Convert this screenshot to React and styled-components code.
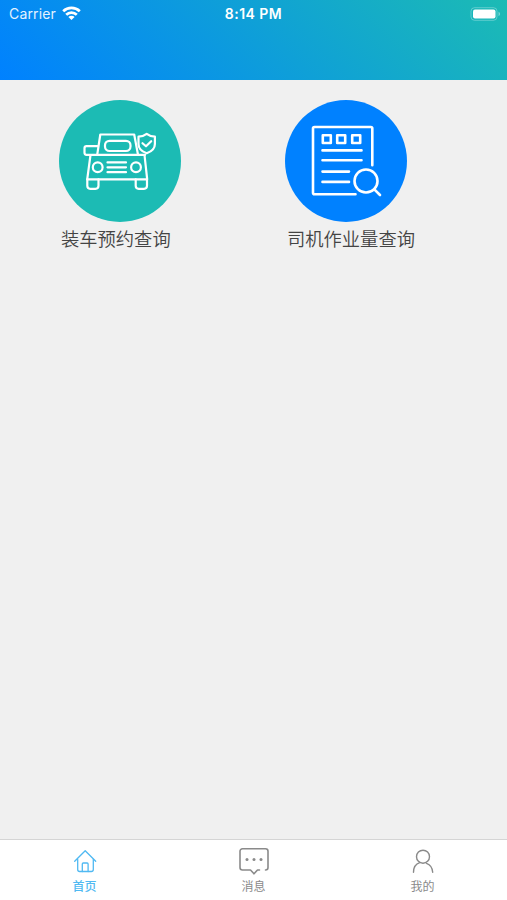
import React, { useState } from "react";
import styled, { createGlobalStyle } from "styled-components";

const GlobalStyle = createGlobalStyle`
  * {
    box-sizing: border-box;
  }

  body {
    margin: 0;
    background-color: #f0f0f0;
    font-family: Inter, "Noto Sans CJK SC", sans-serif;
  }
`;

const Screen = styled.div`
  display: flex;
  flex-direction: column;
  width: 100%;
  height: 100vh;
  background-color: #f0f0f0;
`;

const Header = styled.header`
  height: 80px;
  background: linear-gradient(45deg, #0081ff, #1cbbb4);
`;

const StatusBar = styled.div`
  display: grid;
  grid-template-columns: 1fr auto 1fr;
  align-items: center;
  height: 27px;
  padding: 0 6px 0 9px;
  color: #fff;
`;

const Carrier = styled.div`
  display: flex;
  align-items: center;
  gap: 6px;
  font-size: 14px;
  letter-spacing: 0.15px;
  color: #e4f2ff;
`;

const Time = styled.span`
  margin-right: 3px;
  font-size: 14px;
  font-weight: 600;
  letter-spacing: 0.45px;
`;

const Battery = styled.svg`
  justify-self: end;
`;

const Menu = styled.main`
  flex: 1;
  display: grid;
  grid-template-columns: 226px 226px;
  align-content: start;
  padding: 20px 0 0 59px;
`;

const MenuItem = styled.div`
  display: flex;
  flex-direction: column;
  align-items: flex-start;
  cursor: pointer;
`;

const Circle = styled.div`
  width: 122px;
  height: 122px;
  border-radius: 50%;
  background-color: ${(props) => props.$color};
`;

const LineIcon = styled.svg`
  display: block;
  fill: none;
  stroke: #fff;
  stroke-width: ${(props) => props.$stroke};
  stroke-linecap: round;
  stroke-linejoin: round;
`;

const MenuLabel = styled.span`
  margin: 3px 0 0 2px;
  font-family: "Noto Sans CJK SC", sans-serif;
  font-size: 18.3px;
  font-weight: 350;
  line-height: 26px;
  color: #444;
  white-space: nowrap;
`;

const TabBar = styled.nav`
  display: grid;
  grid-template-columns: repeat(3, 1fr);
  height: 61px;
  border-top: 1px solid #d5d5d5;
  background-color: #fff;
`;

const Tab = styled.button`
  display: flex;
  flex-direction: column;
  align-items: center;
  padding: 6px 0 0;
  border: none;
  background: none;
  color: ${(props) => (props.$active ? "#50b9f2" : "#8a8a8a")};
  font-family: "Noto Sans CJK SC", sans-serif;
  font-size: 12px;
  font-weight: ${(props) => (props.$active ? 500 : 400)};
  line-height: 18px;
  cursor: pointer;
`;

const TabIcon = styled.svg`
  display: block;
  margin-bottom: 1px;
  fill: none;
  stroke: currentColor;
  stroke-width: ${(props) => props.$stroke};
  stroke-linecap: round;
  stroke-linejoin: round;
`;

const TruckIcon = () => (
  <LineIcon width="122" height="122" viewBox="0 0 122 122" $stroke={2.2}>
    <path d="M38.2 54.8 41.3 34.5H75.2L79 54.8" />
    <path d="M38.5 46.2H27.5a2 2 0 0 0-2 2v4.6a2 2 0 0 0 2 2H86" />
    <rect x="46" y="40.8" width="25.5" height="10.2" rx="4.5" />
    <path d="M31.5 55 28.2 79.3H88.2L85.5 55" />
    <path d="M28.3 79.3v6.5a3 3 0 0 0 3 3h5.2a3 3 0 0 0 3-3v-6.5" />
    <path d="M76.7 79.3v6.5a3 3 0 0 0 3 3H85a3 3 0 0 0 3-3v-6.5" />
    <circle cx="38.7" cy="67.3" r="4.9" />
    <circle cx="77" cy="67.3" r="4.9" />
    <path d="M48.5 62.4H67M48.5 67.3H67M48.5 72.2H67" />
    <path d="M87.7 33.8C85 35.8 82 36.7 79.5 36.7V44c0 4.6 3.2 7.5 8.2 9.3 5-1.8 8.2-4.7 8.2-9.3v-7.3c-2.5 0-5.5-.9-8.2-2.9Z" />
    <path d="M83.5 43.2 87 46.3 92.2 41.2" />
  </LineIcon>
);

const ReportIcon = () => (
  <LineIcon width="122" height="122" viewBox="0 0 122 122" $stroke={2.6}>
    <path d="M87.3 65.3V28.5a1.500 1.500 0 0 0-1.500-1.500H29.500a1.500 1.500 0 0 0-1.500 1.500V92.8a1.500 1.500 0 0 0 1.500 1.500H70.5" />
    <rect x="37.8" y="35.2" width="8" height="7.8" />
    <rect x="52.2" y="35.2" width="8" height="7.8" />
    <rect x="67.2" y="35.2" width="8" height="7.8" />
    <path d="M37.5 50.4H76.5M37.5 60.3H76.5M37.5 71.6H64M37.5 81.9H64" />
    <circle cx="81" cy="81" r="11.5" />
    <path d="M89.3 89.3 95 95" />
  </LineIcon>
);

const HomeIcon = () => (
  <TabIcon width="30" height="30" viewBox="0 0 30 30" $stroke={1.3}>
    <path d="M4.7 15.3 15.2 4.7 25.7 15.3" />
    <path d="M7.7 13.5v10a2 2 0 0 0 2 2h11.6a2 2 0 0 0 2-2v-10" />
    <path d="M12.3 25.5V18a1 1 0 0 1 1-1h3.8a1 1 0 0 1 1 1v7.5" />
  </TabIcon>
);

const MessageIcon = () => (
  <TabIcon width="30" height="30" viewBox="0 0 30 30" $stroke={1.6}>
    <path d="M20.500 24H18.500L15 27.800 11.500 24h-8A2.500 2.500 0 0 1 1 21.500V5.300a2.500 2.500 0 0 1 2.500-2.500h23A2.500 2.500 0 0 1 29 5.300v16.200a2.500 2.500 0 0 1-2.500 2.500" />
    <g fill="currentColor" stroke="none">
      <circle cx="8" cy="13.5" r="1.5" />
      <circle cx="15" cy="13.5" r="1.5" />
      <circle cx="22" cy="13.5" r="1.5" />
    </g>
  </TabIcon>
);

const UserIcon = () => (
  <TabIcon width="30" height="30" viewBox="0 0 30 30" $stroke={1.4}>
    <circle cx="15" cy="10.7" r="6.5" />
    <path d="M5.5 26.3c0-5 2.700-8.600 6.200-9.700" />
    <path d="M18.500 17.300c3.500 1.300 6 4.700 6.200 9" />
  </TabIcon>
);

const menuItems = [
  { label: "装车预约查询", color: "#1cbbb4", Icon: TruckIcon },
  { label: "司机作业量查询", color: "#0081ff", Icon: ReportIcon },
];

const tabs = [
  { id: "home", label: "首页", Icon: HomeIcon },
  { id: "message", label: "消息", Icon: MessageIcon },
  { id: "mine", label: "我的", Icon: UserIcon },
];

export default function App() {
  const [activeTab, setActiveTab] = useState("home");

  return (
    <>
      <GlobalStyle />
      <Screen>
        <Header>
          <StatusBar>
            <Carrier>
              <span>Carrier</span>
              <svg width="19" height="15" viewBox="0 0 19 15" fill="none" stroke="#fff" strokeWidth="2.7">
                <path d="M1.200 5.300a11.900 11.900 0 0 1 16.600 0" />
                <path d="M4.200 8.700a7.600 7.600 0 0 1 10.600 0" />
                <path d="M9.500 14 6.400 11a4.400 4.400 0 0 1 6.200 0Z" fill="#fff" stroke="none" />
              </svg>
            </Carrier>
            <Time>8:14 PM</Time>
            <Battery width="31" height="14" viewBox="0 0 31 14">
              <rect x="1" y="0.700" width="26" height="12.600" rx="3.500" fill="none" stroke="#fff" strokeOpacity="0.3" />
              <rect x="3" y="2.500" width="22.500" height="9" rx="2" fill="#fff" />
              <path d="M28.500 4.800v4.400c1-.4 1.600-1.200 1.600-2.200s-.6-1.800-1.600-2.200Z" fill="#fff" fillOpacity="0.4" />
            </Battery>
          </StatusBar>
        </Header>
        <Menu>
          {menuItems.map(({ label, color, Icon }) => (
            <MenuItem key={label}>
              <Circle $color={color}>
                <Icon />
              </Circle>
              <MenuLabel>{label}</MenuLabel>
            </MenuItem>
          ))}
        </Menu>
        <TabBar>
          {tabs.map(({ id, label, Icon }) => (
            <Tab key={id} $active={activeTab === id} onClick={() => setActiveTab(id)}>
              <Icon />
              {label}
            </Tab>
          ))}
        </TabBar>
      </Screen>
    </>
  );
}
